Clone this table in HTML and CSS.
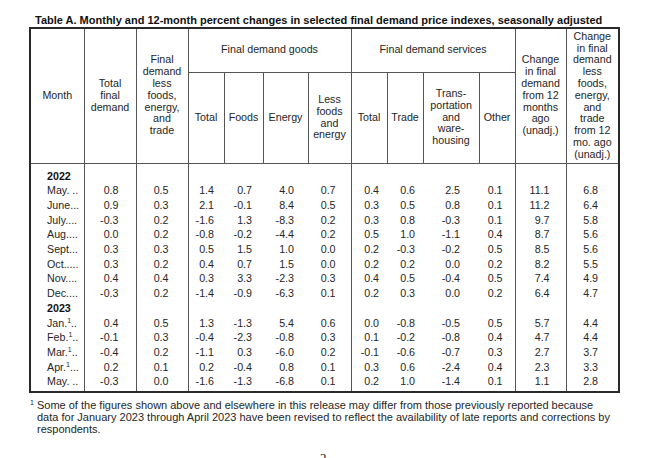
FILE: index.html
```html
<!DOCTYPE html>
<html>
<head>
<meta charset="utf-8">
<link rel="stylesheet" href="styles.css">
</head>
<body>
<div class="page">
  <div class="title">Table A. Monthly and 12-month percent changes in selected final demand price indexes, seasonally adjusted</div>
  <table class="ppi">
    <colgroup>
      <col class="c-month"><col class="c-w52"><col class="c-w52">
      <col class="c-w36"><col class="c-w39"><col class="c-w45"><col class="c-w43">
      <col class="c-w36"><col class="c-w36"><col class="c-w56"><col class="c-w36">
      <col class="c-w51"><col class="c-w53">
    </colgroup>
    <thead>
      <tr class="h1">
        <th rowspan="2">Month</th>
        <th rowspan="2">Total<br>final<br>demand</th>
        <th rowspan="2">Final<br>demand<br>less<br>foods,<br>energy,<br>and<br>trade</th>
        <th colspan="4" class="grp">Final demand goods</th>
        <th colspan="4" class="grp">Final demand services</th>
        <th rowspan="2">Change<br>in final<br>demand<br>from 12<br>months<br>ago<br>(unadj.)</th>
        <th rowspan="2">Change<br>in final<br>demand<br>less<br>foods,<br>energy,<br>and<br>trade<br>from 12<br>mo. ago<br>(unadj.)</th>
      </tr>
      <tr class="h2">
        <th>Total</th>
        <th>Foods</th>
        <th>Energy</th>
        <th>Less<br>foods<br>and<br>energy</th>
        <th>Total</th>
        <th>Trade</th>
        <th>Trans-<br>portation<br>and<br>ware-<br>housing</th>
        <th>Other</th>
      </tr>
    </thead>
    <tbody>
      <tr class="year first"><td class="m">2022</td><td></td><td></td><td></td><td></td><td></td><td></td><td></td><td></td><td></td><td></td><td></td><td></td></tr>
      <tr><td class="m">May. ..</td><td>0.8</td><td>0.5</td><td>1.4</td><td>0.7</td><td>4.0</td><td>0.7</td><td>0.4</td><td>0.6</td><td>2.5</td><td>0.1</td><td>11.1</td><td>6.8</td></tr>
      <tr><td class="m">June...</td><td>0.9</td><td>0.3</td><td>2.1</td><td>-0.1</td><td>8.4</td><td>0.5</td><td>0.3</td><td>0.5</td><td>0.8</td><td>0.1</td><td>11.2</td><td>6.4</td></tr>
      <tr><td class="m">July....</td><td>-0.3</td><td>0.2</td><td>-1.6</td><td>1.3</td><td>-8.3</td><td>0.2</td><td>0.3</td><td>0.8</td><td>-0.3</td><td>0.1</td><td>9.7</td><td>5.8</td></tr>
      <tr><td class="m">Aug....</td><td>0.0</td><td>0.2</td><td>-0.8</td><td>-0.2</td><td>-4.4</td><td>0.2</td><td>0.5</td><td>1.0</td><td>-1.1</td><td>0.4</td><td>8.7</td><td>5.6</td></tr>
      <tr><td class="m">Sept...</td><td>0.3</td><td>0.3</td><td>0.5</td><td>1.5</td><td>1.0</td><td>0.0</td><td>0.2</td><td>-0.3</td><td>-0.2</td><td>0.5</td><td>8.5</td><td>5.6</td></tr>
      <tr><td class="m">Oct.....</td><td>0.3</td><td>0.2</td><td>0.4</td><td>0.7</td><td>1.5</td><td>0.0</td><td>0.2</td><td>0.2</td><td>0.0</td><td>0.2</td><td>8.2</td><td>5.5</td></tr>
      <tr><td class="m">Nov....</td><td>0.4</td><td>0.4</td><td>0.3</td><td>3.3</td><td>-2.3</td><td>0.3</td><td>0.4</td><td>0.5</td><td>-0.4</td><td>0.5</td><td>7.4</td><td>4.9</td></tr>
      <tr><td class="m">Dec....</td><td>-0.3</td><td>0.2</td><td>-1.4</td><td>-0.9</td><td>-6.3</td><td>0.1</td><td>0.2</td><td>0.3</td><td>0.0</td><td>0.2</td><td>6.4</td><td>4.7</td></tr>
      <tr class="year"><td class="m">2023</td><td></td><td></td><td></td><td></td><td></td><td></td><td></td><td></td><td></td><td></td><td></td><td></td></tr>
      <tr><td class="m">Jan.<sup>1</sup>..</td><td>0.4</td><td>0.5</td><td>1.3</td><td>-1.3</td><td>5.4</td><td>0.6</td><td>0.0</td><td>-0.8</td><td>-0.5</td><td>0.5</td><td>5.7</td><td>4.4</td></tr>
      <tr><td class="m">Feb.<sup>1</sup>..</td><td>-0.1</td><td>0.3</td><td>-0.4</td><td>-2.3</td><td>-0.8</td><td>0.3</td><td>0.1</td><td>-0.2</td><td>-0.8</td><td>0.4</td><td>4.7</td><td>4.4</td></tr>
      <tr><td class="m">Mar.<sup>1</sup>..</td><td>-0.4</td><td>0.2</td><td>-1.1</td><td>0.3</td><td>-6.0</td><td>0.2</td><td>-0.1</td><td>-0.6</td><td>-0.7</td><td>0.3</td><td>2.7</td><td>3.7</td></tr>
      <tr><td class="m">Apr.<sup>1</sup>...</td><td>0.2</td><td>0.1</td><td>0.2</td><td>-0.4</td><td>0.8</td><td>0.1</td><td>0.3</td><td>0.6</td><td>-2.4</td><td>0.4</td><td>2.3</td><td>3.3</td></tr>
      <tr class="last"><td class="m">May. ..</td><td>-0.3</td><td>0.0</td><td>-1.6</td><td>-1.3</td><td>-6.8</td><td>0.1</td><td>0.2</td><td>1.0</td><td>-1.4</td><td>0.1</td><td>1.1</td><td>2.8</td></tr>
    </tbody>
  </table>
  <p class="footnote"><sup>1</sup> Some of the figures shown above and elsewhere in this release may differ from those previously reported because<br>data for January 2023 through April 2023 have been revised to reflect the availability of late reports and corrections by<br>respondents.</p>
  <div class="pageno">2</div>
</div>
</body>
</html>
```
FILE: styles.css
```css
html, body {
  margin: 0;
  padding: 0;
  background: #fff;
}

.page {
  padding: 14px 0 0 29px;
  font-family: "Liberation Sans", Arial, sans-serif;
  color: #262626;
}

.title {
  font-weight: bold;
  font-size: 11px;
  line-height: 13px;
  height: 13px;
  margin-left: 6px;
  white-space: nowrap;
  color: #111;
}

.ppi {
  border-collapse: collapse;
  table-layout: fixed;
  width: 589px;
  border: 2px solid #2a2a2a;
  font-size: 10.7px;
}

.c-month { width: 54px; }
.c-w52 { width: 52px; }
.c-w36 { width: 36px; }
.c-w39 { width: 39px; }
.c-w45 { width: 45px; }
.c-w43 { width: 43px; }
.c-w56 { width: 56px; }
.c-w51 { width: 51px; }
.c-w53 { width: 53px; }

.ppi th {
  font-weight: normal;
  line-height: 11.8px;
  padding: 0;
  text-align: center;
  vertical-align: middle;
  border: 1px solid #555;
}

.ppi .h1 { height: 44px; }
.ppi .h2 { height: 91px; }

.ppi td {
  padding: 0;
  height: 14.7px;
  line-height: 14.7px;
  text-align: right;
  white-space: nowrap;
  overflow: hidden;
}

.ppi td.m {
  text-align: left;
  padding-left: 16px;
}

.ppi tr.year td.m {
  font-weight: bold;
  color: #111;
}

.ppi tr.first td { padding-top: 5px; }
.ppi tr.last td { padding-bottom: 2px; }

/* vertical rules between column groups in the body */
.ppi td:nth-child(2),
.ppi td:nth-child(3),
.ppi td:nth-child(4),
.ppi td:nth-child(8),
.ppi td:nth-child(12),
.ppi td:nth-child(13) {
  border-left: 1px solid #555;
}

.ppi td:nth-child(2) { padding-right: 17px; }
.ppi td:nth-child(3) { padding-right: 19px; }
.ppi td:nth-child(4) { padding-right: 10px; }
.ppi td:nth-child(5) { padding-right: 11px; }
.ppi td:nth-child(6) { padding-right: 14px; }
.ppi td:nth-child(7) { padding-right: 15px; }
.ppi td:nth-child(8) { padding-right: 8px; }
.ppi td:nth-child(9) { padding-right: 8px; }
.ppi td:nth-child(10) { padding-right: 19px; }
.ppi td:nth-child(11) { padding-right: 12px; }
.ppi td:nth-child(12) { padding-right: 16px; }
.ppi td:nth-child(13) { padding-right: 20px; }

.ppi sup {
  font-size: 7px;
  line-height: 0;
  vertical-align: 4px;
}

.footnote {
  margin: 6px 0 0 0;
  padding-left: 8px;
  text-indent: -7px;
  font-size: 11px;
  line-height: 12px;
  white-space: nowrap;
}

.footnote sup {
  font-size: 7px;
  line-height: 0;
  vertical-align: 4px;
}

.pageno {
  margin: 16px 0 0 291px;
  font-family: "Liberation Serif", "Times New Roman", serif;
  font-size: 13px;
  line-height: 14px;
  color: #222;
}
```
